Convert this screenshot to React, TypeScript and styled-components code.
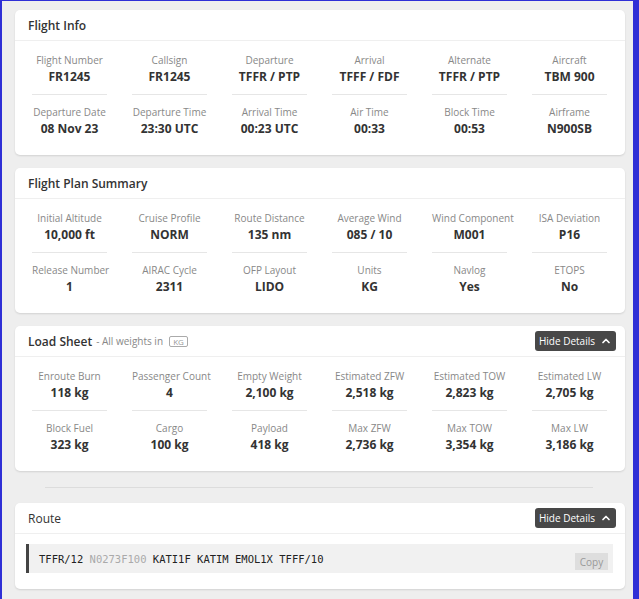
import { createGlobalStyle } from 'styled-components'
import styled from 'styled-components'
import { ChevronUp } from 'lucide-react'

const GlobalStyle = createGlobalStyle`
  html, body {
    margin: 0;
    padding: 0;
  }
  body {
    font-family: 'Open Sans', 'Noto Sans', sans-serif;
    color: #333;
  }
`

const Frame = styled.div`
  box-sizing: border-box;
  min-height: 100vh;
  border-style: solid;
  border-color: #2f2fd6;
  border-width: 1px 6px 3px 2px;
  background-color: #eeeeee;
  padding: 9px 8px 11px 13px;
`

const Card = styled.section`
  background-color: #ffffff;
  border-radius: 5px;
  box-shadow: 0 1px 2px rgba(0, 0, 0, 0.12);
  margin-bottom: 13px;
`

const CardHeader = styled.header`
  height: 30px;
  display: flex;
  align-items: center;
  justify-content: space-between;
  padding: 0 9px 0 13px;
  border-bottom: 1px solid #efefef;
`

const TitleGroup = styled.div`
  display: flex;
  align-items: center;
`

const Title = styled.h2<{ $light?: boolean }>`
  margin: 0;
  font-size: 12px;
  font-weight: ${({ $light }) => ($light ? 500 : 600)};
  color: #333;
`

const Subtitle = styled.span`
  font-size: 10px;
  color: #888;
  margin-left: 4px;
`

const UnitBadge = styled.span`
  display: inline-flex;
  align-items: center;
  justify-content: center;
  box-sizing: border-box;
  height: 11px;
  width: 19px;
  margin-left: 6px;
  border: 1px solid #aaa;
  border-radius: 2px;
  font-size: 8px;
  color: #999;
`

const ToggleButton = styled.button`
  display: flex;
  align-items: center;
  gap: 5px;
  height: 20px;
  padding: 0 4px;
  border: none;
  border-radius: 3px;
  background-color: #484848;
  color: #fff;
  font-family: inherit;
  font-size: 10px;
  cursor: pointer;
`

const Grid = styled.div`
  display: grid;
  grid-template-columns: repeat(6, minmax(0, 1fr));
  padding: 2px 5px 8px;
`

const Cell = styled.div<{ $divided?: boolean }>`
  margin: 0 13px 0 12px;
  padding: 9px 0 8px;
  text-align: center;
  border-bottom: 1px solid ${({ $divided }) => ($divided ? '#e6e6e6' : 'transparent')};
`

const Label = styled.div`
  font-size: 10px;
  line-height: 16px;
  color: #888;
  white-space: nowrap;
`

const Value = styled.div`
  font-size: 12px;
  line-height: 18px;
  font-weight: 700;
  color: #333;
  white-space: nowrap;
`

const Rule = styled.hr`
  border: none;
  border-top: 1px solid #dcdcdc;
  margin: 16px 32px 15px 30px;
`

const RouteBody = styled.div`
  padding: 10px 12px 16px 11px;
`

const CodeBlock = styled.div`
  display: flex;
  align-items: center;
  justify-content: space-between;
  height: 29px;
  padding: 0 5px 0 10px;
  border-left: 3px solid #444;
  background-color: #f1f1f1;
`

const Code = styled.code`
  font-family: 'DejaVu Sans Mono', 'Liberation Mono', monospace;
  font-size: 10.5px;
  color: #222;
`

const Muted = styled.span`
  color: #aaa;
`

const CopyButton = styled.button`
  height: 17px;
  width: 33px;
  padding: 0;
  border: none;
  background-color: #dedede;
  color: #999;
  font-family: inherit;
  font-size: 10px;
  margin-top: 6px;
`

type Field = { label: string; value: string }

const flightInfo: Field[] = [
  { label: 'Flight Number', value: 'FR1245' },
  { label: 'Callsign', value: 'FR1245' },
  { label: 'Departure', value: 'TFFR / PTP' },
  { label: 'Arrival', value: 'TFFF / FDF' },
  { label: 'Alternate', value: 'TFFR / PTP' },
  { label: 'Aircraft', value: 'TBM 900' },
  { label: 'Departure Date', value: '08 Nov 23' },
  { label: 'Departure Time', value: '23:30 UTC' },
  { label: 'Arrival Time', value: '00:23 UTC' },
  { label: 'Air Time', value: '00:33' },
  { label: 'Block Time', value: '00:53' },
  { label: 'Airframe', value: 'N900SB' },
]

const planSummary: Field[] = [
  { label: 'Initial Altitude', value: '10,000 ft' },
  { label: 'Cruise Profile', value: 'NORM' },
  { label: 'Route Distance', value: '135 nm' },
  { label: 'Average Wind', value: '085 / 10' },
  { label: 'Wind Component', value: 'M001' },
  { label: 'ISA Deviation', value: 'P16' },
  { label: 'Release Number', value: '1' },
  { label: 'AIRAC Cycle', value: '2311' },
  { label: 'OFP Layout', value: 'LIDO' },
  { label: 'Units', value: 'KG' },
  { label: 'Navlog', value: 'Yes' },
  { label: 'ETOPS', value: 'No' },
]

const loadSheet: Field[] = [
  { label: 'Enroute Burn', value: '118 kg' },
  { label: 'Passenger Count', value: '4' },
  { label: 'Empty Weight', value: '2,100 kg' },
  { label: 'Estimated ZFW', value: '2,518 kg' },
  { label: 'Estimated TOW', value: '2,823 kg' },
  { label: 'Estimated LW', value: '2,705 kg' },
  { label: 'Block Fuel', value: '323 kg' },
  { label: 'Cargo', value: '100 kg' },
  { label: 'Payload', value: '418 kg' },
  { label: 'Max ZFW', value: '2,736 kg' },
  { label: 'Max TOW', value: '3,354 kg' },
  { label: 'Max LW', value: '3,186 kg' },
]

function FieldGrid({ fields }: { fields: Field[] }) {
  return (
    <Grid>
      {fields.map((f, i) => (
        <Cell key={f.label} $divided={i < 6}>
          <Label>{f.label}</Label>
          <Value>{f.value}</Value>
        </Cell>
      ))}
    </Grid>
  )
}

function HideButton() {
  return (
    <ToggleButton>
      Hide Details
      <ChevronUp size={12} strokeWidth={3.5} />
    </ToggleButton>
  )
}

export default function App() {
  return (
    <Frame>
      <GlobalStyle />
      <Card>
        <CardHeader>
          <Title>Flight Info</Title>
        </CardHeader>
        <FieldGrid fields={flightInfo} />
      </Card>
      <Card>
        <CardHeader>
          <Title>Flight Plan Summary</Title>
        </CardHeader>
        <FieldGrid fields={planSummary} />
      </Card>
      <Card>
        <CardHeader>
          <TitleGroup>
            <Title>Load Sheet</Title>
            <Subtitle>- All weights in</Subtitle>
            <UnitBadge>KG</UnitBadge>
          </TitleGroup>
          <HideButton />
        </CardHeader>
        <FieldGrid fields={loadSheet} />
      </Card>
      <Rule />
      <Card>
        <CardHeader>
          <Title $light>Route</Title>
          <HideButton />
        </CardHeader>
        <RouteBody>
          <CodeBlock>
            <Code>
              TFFR/12 <Muted>N0273F100</Muted> KATI1F KATIM EMOL1X TFFF/10
            </Code>
            <CopyButton>Copy</CopyButton>
          </CodeBlock>
        </RouteBody>
      </Card>
    </Frame>
  )
}
